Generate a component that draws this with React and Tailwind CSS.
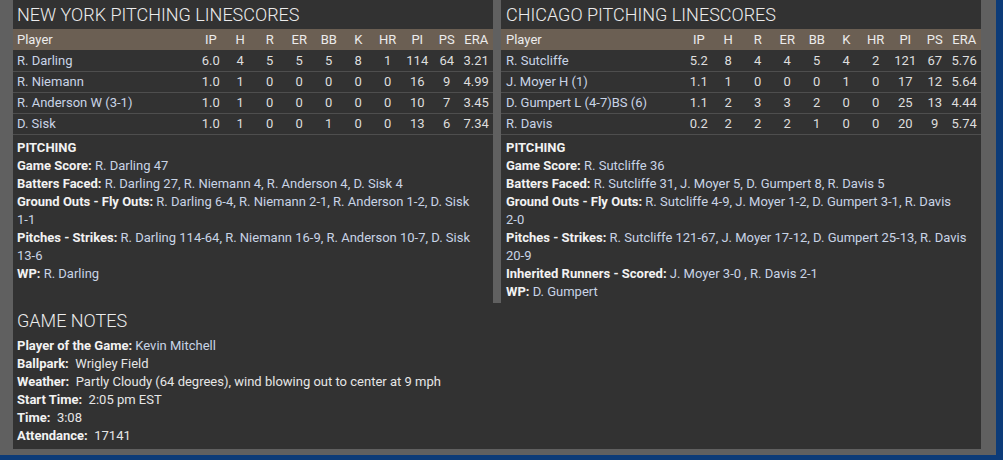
import React from "react";

const cols = ["IP", "H", "R", "ER", "BB", "K", "HR", "PI", "PS", "ERA"];

const ny = [
  ["R. Darling", "6.0", "4", "5", "5", "5", "8", "1", "114", "64", "3.21"],
  ["R. Niemann", "1.0", "1", "0", "0", "0", "0", "0", "16", "9", "4.99"],
  ["R. Anderson W (3-1)", "1.0", "1", "0", "0", "0", "0", "0", "10", "7", "3.45"],
  ["D. Sisk", "1.0", "1", "0", "0", "1", "0", "0", "13", "6", "7.34"],
];

const chi = [
  ["R. Sutcliffe", "5.2", "8", "4", "4", "5", "4", "2", "121", "67", "5.76"],
  ["J. Moyer H (1)", "1.1", "1", "0", "0", "0", "1", "0", "17", "12", "5.64"],
  ["D. Gumpert L (4-7)BS (6)", "1.1", "2", "3", "3", "2", "0", "0", "25", "13", "4.44"],
  ["R. Davis", "0.2", "2", "2", "2", "1", "0", "0", "20", "9", "5.74"],
];

const L = ({ children }) => <span className="font-bold text-[#f2f2f2]">{children}</span>;
const N = ({ children }) => <span className="text-[#c9d4e6]">{children}</span>;

function Panel({ title, rows, pad, children }) {
  return (
    <div className="bg-[#323232] flex flex-col">
      <div className={`h-[29px] flex items-center ${pad} text-[18px] font-light text-[#ececec]`}>
        {title}
      </div>
      <div className={`h-[21px] mb-[1px] bg-[#6b5f53] grid grid-cols-[1fr_repeat(10,29.5px)] items-center ${pad} pr-[2px] text-[#ececec]`}>
        <div>Player</div>
        {cols.map((c) => (
          <div key={c} className="text-center">{c}</div>
        ))}
      </div>
      {rows.map((r) => (
        <div
          key={r[0]}
          className={`h-[21px] border-b border-[#4e4e4e] grid grid-cols-[1fr_repeat(10,29.5px)] items-center ${pad} pr-[2px]`}
        >
          <div className="text-[#c9d4e6] whitespace-nowrap">{r[0]}</div>
          {r.slice(1).map((v, i) => (
            <div key={i} className="text-center text-[#dedede]">{v}</div>
          ))}
        </div>
      ))}
      <div className={`pt-[4px] pb-[2px] ${pad} pr-[2px] leading-[18px] text-[#e6e6e6] whitespace-nowrap`}>{children}</div>
    </div>
  );
}

export default function App() {
  return (
    <div className="w-[1003px] h-[460px] bg-[#0c3b78] font-['Roboto',sans-serif] text-[13px] overflow-hidden">
      <div className="w-[996px] h-[455px] bg-[#606060] pl-[13px] pr-[15px] pb-[6px]">
        <div className="w-[968px] flex flex-col">
          <div className="grid grid-cols-2 gap-[8px]">
            <Panel title="NEW YORK PITCHING LINESCORES" rows={ny} pad="pl-[4px]">
              <div className="font-bold text-[#f2f2f2]">PITCHING</div>
              <div>
                <L>Game Score:</L> <N>R. Darling 47</N>
              </div>
              <div>
                <L>Batters Faced:</L> <N>R. Darling 27, R. Niemann 4, R. Anderson 4, D. Sisk 4</N>
              </div>
              <div>
                <L>Ground Outs - Fly Outs:</L>{" "}
                <N>
                  R. Darling 6-4, R. Niemann 2-1, R. Anderson 1-2, D. Sisk
                  <br />
                  1-1
                </N>
              </div>
              <div>
                <L>Pitches - Strikes:</L>{" "}
                <N>
                  R. Darling 114-64, R. Niemann 16-9, R. Anderson 10-7, D. Sisk
                  <br />
                  13-6
                </N>
              </div>
              <div>
                <L>WP:</L> <N>R. Darling</N>
              </div>
            </Panel>
            <Panel title="CHICAGO PITCHING LINESCORES" rows={chi} pad="pl-[5px]">
              <div className="font-bold text-[#f2f2f2]">PITCHING</div>
              <div>
                <L>Game Score:</L> <N>R. Sutcliffe 36</N>
              </div>
              <div>
                <L>Batters Faced:</L> <N>R. Sutcliffe 31, J. Moyer 5, D. Gumpert 8, R. Davis 5</N>
              </div>
              <div>
                <L>Ground Outs - Fly Outs:</L>{" "}
                <N>
                  R. Sutcliffe 4-9, J. Moyer 1-2, D. Gumpert 3-1, R. Davis
                  <br />
                  2-0
                </N>
              </div>
              <div>
                <L>Pitches - Strikes:</L>{" "}
                <N>
                  R. Sutcliffe 121-67, J. Moyer 17-12, D. Gumpert 25-13, R. Davis
                  <br />
                  20-9
                </N>
              </div>
              <div>
                <L>Inherited Runners - Scored:</L> <N>J. Moyer 3-0 , R. Davis 2-1</N>
              </div>
              <div>
                <L>WP:</L> <N>D. Gumpert</N>
              </div>
            </Panel>
          </div>
          <div className="bg-[#323232] h-[146px] pl-[4px] text-[#e6e6e6]">
            <div className="h-[34px] flex items-center text-[18px] font-light text-[#ececec]">GAME NOTES</div>
            <div className="leading-[18px]">
              <div>
                <L>Player of the Game:</L> <N>Kevin Mitchell</N>
              </div>
              <div>
                <L>Ballpark:</L>&nbsp; Wrigley Field
              </div>
              <div>
                <L>Weather:</L>&nbsp; Partly Cloudy (64 degrees), wind blowing out to center at 9 mph
              </div>
              <div>
                <L>Start Time:</L>&nbsp; 2:05 pm EST
              </div>
              <div>
                <L>Time:</L>&nbsp; 3:08
              </div>
              <div>
                <L>Attendance:</L>&nbsp; 17141
              </div>
            </div>
          </div>
        </div>
      </div>
    </div>
  );
}
